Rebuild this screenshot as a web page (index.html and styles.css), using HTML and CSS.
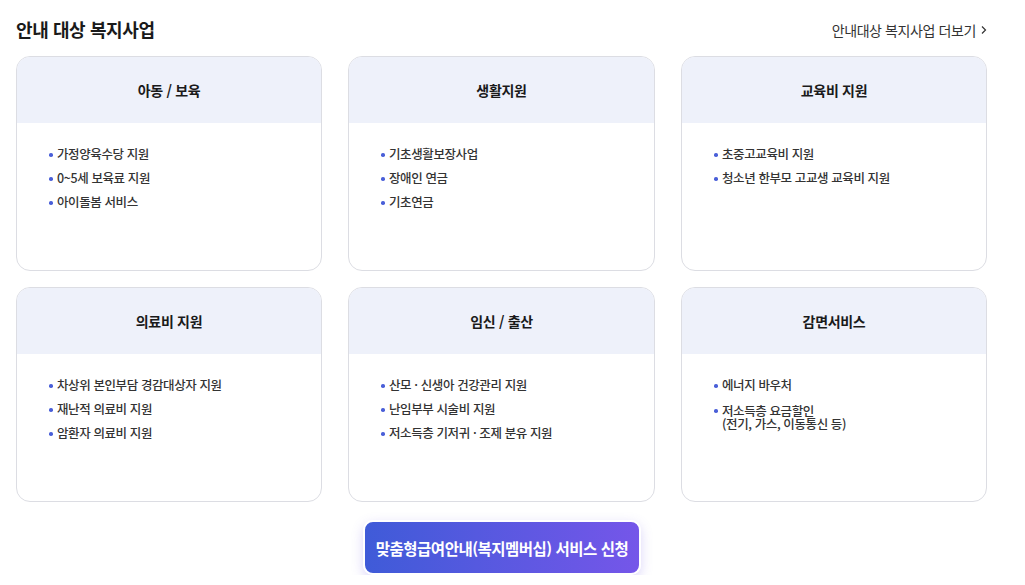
FILE: index.html
```html
<!DOCTYPE html>
<html lang="ko">
<head>
<meta charset="utf-8">
<link rel="stylesheet" href="styles.css">
</head>
<body>
<section class="wrap">
  <div class="top">
    <h2 class="title">안내 대상 복지사업</h2>
    <a class="more">안내대상 복지사업 더보기 <svg width="8" height="10" viewBox="0 0 8 10"><path d="M2 1.5 L5.5 5 L2 8.5" fill="none" stroke="#333" stroke-width="1.2"/></svg></a>
  </div>
  <div class="grid">
    <div class="card"><div class="head">아동 / 보육</div>
      <ul><li>가정양육수당 지원</li><li>0~5세 보육료 지원</li><li>아이돌봄 서비스</li></ul></div>
    <div class="card"><div class="head">생활지원</div>
      <ul><li>기초생활보장사업</li><li>장애인 연금</li><li>기초연금</li></ul></div>
    <div class="card"><div class="head">교육비 지원</div>
      <ul><li>초중고교육비 지원</li><li>청소년 한부모 고교생 교육비 지원</li></ul></div>
    <div class="card"><div class="head">의료비 지원</div>
      <ul><li>차상위 본인부담 경감대상자 지원</li><li>재난적 의료비 지원</li><li>암환자 의료비 지원</li></ul></div>
    <div class="card"><div class="head">임신 / 출산</div>
      <ul><li>산모 · 신생아 건강관리 지원</li><li>난임부부 시술비 지원</li><li>저소득층 기저귀 · 조제 분유 지원</li></ul></div>
    <div class="card"><div class="head">감면서비스</div>
      <ul><li>에너지 바우처</li><li class="two">저소득층 요금할인<br>(전기, 가스, 이동통신 등)</li></ul></div>
  </div>
  <div class="btnrow"><a class="apply">맞춤형급여안내(복지멤버십) 서비스 신청</a></div>
</section>
</body>
</html>
```
FILE: styles.css
```css
* { box-sizing: border-box; }
body {
  margin: 0;
  background: #fff;
  font-family: "Noto Sans CJK KR", "Noto Sans", sans-serif;
  color: #222;
}
.wrap { padding: 14px 0 0 16px; width: 988px; }
.top {
  display: flex;
  justify-content: space-between;
  align-items: center;
  height: 30px;
}
.title {
  margin: 0;
  font-size: 18px;
  font-weight: 700;
  letter-spacing: -0.4px;
  color: #1a1a1a;
}
.more {
  font-size: 14px;
  color: #333;
  letter-spacing: -0.4px;
  display: flex;
  align-items: center;
  gap: 4px;
  padding-top: 2px;
}
.grid {
  margin-top: 12px;
  display: grid;
  grid-template-columns: 306px 307px 306px;
  column-gap: 26px;
  row-gap: 16px;
}
.card {
  border: 1px solid #dcdde3;
  border-radius: 14px;
  height: 215px;
  overflow: hidden;
}
.head {
  background: #eef1fa;
  height: 66px;
  display: flex;
  align-items: center;
  justify-content: center;
  font-size: 14px;
  font-weight: 700;
  color: #1a1a1a;
  letter-spacing: -0.3px;
}
ul {
  list-style: none;
  margin: 0;
  padding: 22px 0 0 40px;
}
li {
  position: relative;
  font-size: 12.5px;
  font-weight: 500;
  line-height: 17px;
  margin-bottom: 7px;
  color: #333;
  letter-spacing: -0.4px;
}
li::before {
  content: "";
  position: absolute;
  left: -8px;
  top: 8px;
  width: 3.5px;
  height: 3.5px;
  border-radius: 50%;
  background: #4a5fd8;
}
li.two { line-height: 13px; margin-top: 11px; }
li.two::before { top: 5px; }
.btnrow {
  display: flex;
  justify-content: center;
  margin-top: 18px;
}
.apply {
  display: flex;
  align-items: center;
  justify-content: center;
  width: 278px;
  height: 55px;
  border-radius: 10px;
  border: 2px solid #fff;
  background: linear-gradient(90deg, #3f5bd8, #7556e9);
  color: #fff;
  font-size: 15.5px;
  font-weight: 700;
  letter-spacing: -0.5px;
  box-shadow: 0 4px 12px rgba(110, 90, 230, 0.25);
}
```
